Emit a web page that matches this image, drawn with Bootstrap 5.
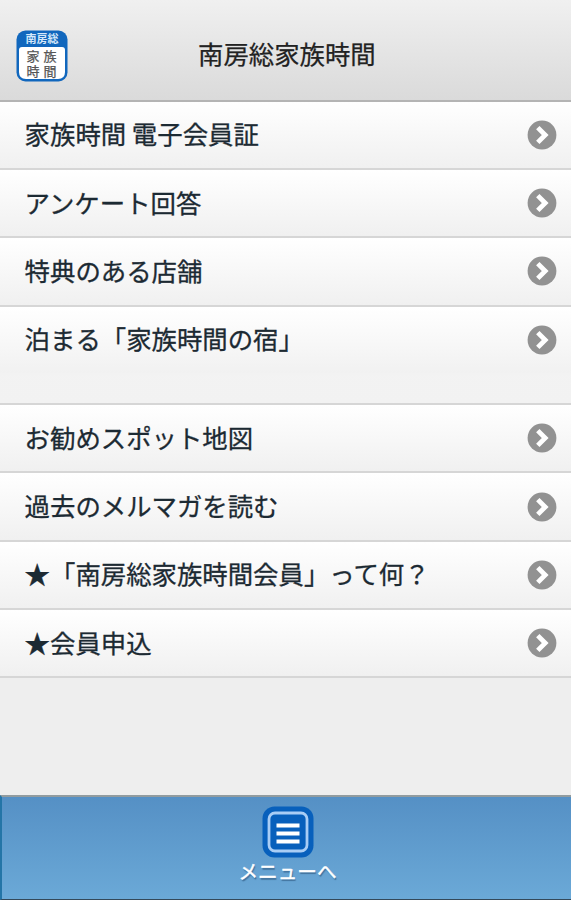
<!DOCTYPE html>
<html lang="ja">
<head>
<meta charset="utf-8">
<meta name="viewport" content="width=device-width, initial-scale=1">
<title>南房総家族時間</title>
<link href="https://cdn.jsdelivr.net/npm/bootstrap@5.3.0/dist/css/bootstrap.min.css" rel="stylesheet">
<style>
body { font-family: "Noto Sans CJK JP", sans-serif; font-size: 25.4px; line-height: 1; color: #1c2a33; background: linear-gradient(#f8f8f8, #eee 75%); height: 900px; overflow: hidden; }
.app-bar { height: 101.7px; background: linear-gradient(#f0f0f0, #dadada); border-bottom: 2px solid #b4b4b4; padding: 0 16px; color: #222; }
.app-bar h1 { font-size: 25.4px; margin: 0 0 0 130px; line-height: 1; font-weight: 400; -webkit-text-stroke: .25px; padding-top: 7px; }
.app-logo { width: 52px; height: 52px; margin-top: 12px; }
.menu-group { --bs-list-group-bg: transparent; border-radius: 0; }
.menu-row { height: 68.3px; padding: 0 14.5px 0 24.6px; border: 0; border-bottom: 2px solid #d6d6d6; background: linear-gradient(#fff, #f0f0f0); color: #1c2a33; -webkit-text-stroke: .3px; white-space: nowrap; }
.menu-row:hover { color: #1c2a33; background: linear-gradient(#fff, #f0f0f0); }
.menu-row span { padding-bottom: 1.6px; }
.menu-group-first .menu-row:last-child { border-bottom-color: #f2f2f2; background: linear-gradient(#fff, #f1f1f1); }
.menu-group-second { margin-top: 28.3px; border-top: 2px solid #d6d6d6; }
.menu-row svg { width: 30px; height: 30px; flex: none; }
.bottom-bar { height: 105px; background: linear-gradient(#5590c5, #6ba9d7); border-top: 2px solid #929c9f; border-bottom: 1px solid #34495a; border-left: 2px solid #2475a7; color: #fff; padding: 9px 0 0 2px; }
.bottom-bar svg { width: 52px; height: 52px; }
.bottom-bar a { font-size: 19.6px; line-height: 1; text-shadow: 1px 2px 1px #41729c; -webkit-text-stroke: .4px; }
.bottom-bar span { padding-top: 3px; }
</style>
<script src="https://cdn.jsdelivr.net/npm/bootstrap@5.3.0/dist/js/bootstrap.bundle.min.js"></script>
</head>
<body class="d-flex flex-column">
<svg class="d-none"><symbol id="go" viewBox="0 0 30 30"><circle cx="15" cy="15" r="14.4" fill="#929292"/><path d="M10.800 7.600 18.200 15l-7.400 7.400" fill="none" stroke="#fff" stroke-width="4.8"/></symbol></svg>
<header class="app-bar d-flex align-items-center">
  <svg class="app-logo" viewBox="0 0 52 52" role="img" aria-label="南房総 家族時間">
    <rect x=".5" y=".5" width="51" height="51" rx="9" fill="#1167bd"/>
    <path d="M3 20q0-3 3-3h40q3 0 3 3v22q0 7-7 7H10q-7 0-7-7z" fill="#fff"/>
    <text x="26" y="12.500" font-size="11" font-weight="700" fill="#d5e8fa" text-anchor="middle">南房総</text>
    <g font-size="13" fill="#555" stroke="#555" stroke-width=".25"><text x="10.5" y="30.500">家</text><text x="27.5" y="30.500">族</text><text x="10.5" y="46">時</text><text x="27.5" y="46">間</text></g>
  </svg>
  <h1>南房総家族時間</h1>
</header>
<main class="flex-grow-1">
  <nav class="list-group menu-group menu-group-first">
    <a href="#" class="list-group-item menu-row d-flex align-items-center justify-content-between"><span>家族時間 電子会員証</span><svg><use href="#go"/></svg></a>
    <a href="#" class="list-group-item menu-row d-flex align-items-center justify-content-between"><span>アンケート回答</span><svg><use href="#go"/></svg></a>
    <a href="#" class="list-group-item menu-row d-flex align-items-center justify-content-between"><span>特典のある店舗</span><svg><use href="#go"/></svg></a>
    <a href="#" class="list-group-item menu-row d-flex align-items-center justify-content-between"><span>泊まる「家族時間の宿」</span><svg><use href="#go"/></svg></a>
  </nav>
  <nav class="list-group menu-group menu-group-second">
    <a href="#" class="list-group-item menu-row d-flex align-items-center justify-content-between"><span>お勧めスポット地図</span><svg><use href="#go"/></svg></a>
    <a href="#" class="list-group-item menu-row d-flex align-items-center justify-content-between"><span>過去のメルマガを読む</span><svg><use href="#go"/></svg></a>
    <a href="#" class="list-group-item menu-row d-flex align-items-center justify-content-between"><span>★「南房総家族時間会員」って何？</span><svg><use href="#go"/></svg></a>
    <a href="#" class="list-group-item menu-row d-flex align-items-center justify-content-between"><span>★会員申込</span><svg><use href="#go"/></svg></a>
  </nav>
</main>
<footer class="bottom-bar d-flex justify-content-center">
  <a href="#" class="d-flex flex-column align-items-center text-white text-decoration-none">
    <svg viewBox="0 0 52 52"><rect x=".5" y=".5" width="51" height="51" rx="12" fill="#0860bc"/><rect x="7" y="7" width="38" height="38" rx="6" fill="none" stroke="#a9cdf5" stroke-width="2.8"/><path d="M14.500 19.500h23M14.500 27.500h23M14.500 35.500h23" stroke="#fff" stroke-width="3.800"/></svg>
    <span>メニューへ</span>
  </a>
</footer>
</body>
</html>
